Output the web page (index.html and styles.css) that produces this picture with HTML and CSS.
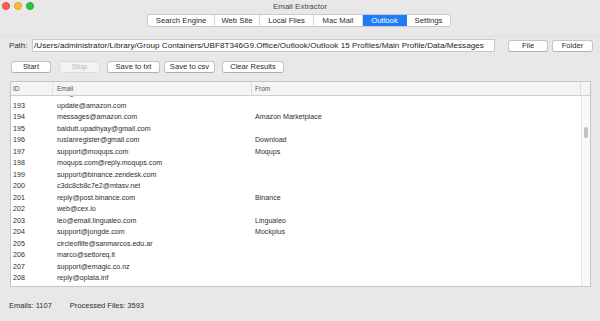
FILE: index.html
```html
<!DOCTYPE html>
<html>
<head>
<meta charset="utf-8">
<link rel="stylesheet" href="styles.css">
</head>
<body>
<div class="window">
  <div class="titlebar">
    <div class="lights">
      <span class="light red"></span>
      <span class="light yellow"></span>
      <span class="light green"></span>
    </div>
    <div class="title">Email Extractor</div>
  </div>
  <div class="tabrow">
    <div class="segmented">
      <div class="seg w1">Search Engine</div>
      <div class="seg w2">Web Site</div>
      <div class="seg w3">Local Files</div>
      <div class="seg w4">Mac Mail</div>
      <div class="seg w5 active">Outlook</div>
      <div class="seg w6">Settings</div>
    </div>
  </div>
  <div class="pathrow">
    <span class="label">Path:</span>
    <div class="field">/Users/administrator/Library/Group Containers/UBF8T346G9.Office/Outlook/Outlook 15 Profiles/Main Profile/Data/Messages</div>
    <button class="btn bfile">File</button>
    <button class="btn bfolder">Folder</button>
  </div>
  <div class="btnrow">
    <button class="btn bstart">Start</button>
    <button class="btn bstop disabled">Stop</button>
    <button class="btn btxt">Save to txt</button>
    <button class="btn bcsv">Save to csv</button>
    <button class="btn bclear">Clear Results</button>
  </div>
  <div class="table">
    <div class="thead">
      <div class="c1">ID</div>
      <div class="c2">Email</div>
      <div class="c3">From</div>
      <div class="corner"></div>
    </div>
    <div class="tbody">
      <div class="rows">
        <div class="inner">
          <div class="row"><div class="c1">192</div><div class="c2">info@koalashow.ca</div><div class="c3"></div></div>
          <div class="row"><div class="c1">193</div><div class="c2">update@amazon.com</div><div class="c3"></div></div>
          <div class="row"><div class="c1">194</div><div class="c2">messages@amazon.com</div><div class="c3">Amazon Marketplace</div></div>
          <div class="row"><div class="c1">195</div><div class="c2">baldutt.upadhyay@gmail.com</div><div class="c3"></div></div>
          <div class="row"><div class="c1">196</div><div class="c2">ruslanregister@gmail.com</div><div class="c3">Download</div></div>
          <div class="row"><div class="c1">197</div><div class="c2">support@moqups.com</div><div class="c3">Moqups</div></div>
          <div class="row"><div class="c1">198</div><div class="c2">moqups.com@reply.moqups.com</div><div class="c3"></div></div>
          <div class="row"><div class="c1">199</div><div class="c2">support@binance.zendesk.com</div><div class="c3"></div></div>
          <div class="row"><div class="c1">200</div><div class="c2">c3dc8cb8c7e2@mtasv.net</div><div class="c3"></div></div>
          <div class="row"><div class="c1">201</div><div class="c2">reply@post.binance.com</div><div class="c3">Binance</div></div>
          <div class="row"><div class="c1">202</div><div class="c2">web@cex.io</div><div class="c3"></div></div>
          <div class="row"><div class="c1">203</div><div class="c2">leo@email.lingualeo.com</div><div class="c3">Lingualeo</div></div>
          <div class="row"><div class="c1">204</div><div class="c2">support@jongde.com</div><div class="c3">Mockplus</div></div>
          <div class="row"><div class="c1">205</div><div class="c2">circleoflife@sanmarcos.edu.ar</div><div class="c3"></div></div>
          <div class="row"><div class="c1">206</div><div class="c2">marco@settoreq.it</div><div class="c3"></div></div>
          <div class="row"><div class="c1">207</div><div class="c2">support@emagic.co.nz</div><div class="c3"></div></div>
          <div class="row"><div class="c1">208</div><div class="c2">reply@oplata.inf</div><div class="c3"></div></div>
          <div class="row"><div class="c1">209</div><div class="c2">announcements@mailer.kodak.com</div><div class="c3"></div></div>
        </div>
      </div>
      <div class="scroll"><div class="thumb"></div></div>
    </div>
  </div>
  <div class="footer">
    <span class="emails">Emails: 1107</span>
    <span class="files">Processed Files: 3593</span>
  </div>
</div>
</body>
</html>
```

FILE: styles.css
```css
* { box-sizing: border-box; }
html, body { margin: 0; padding: 0; }
body {
  width: 600px;
  height: 321px;
  overflow: hidden;
  background: #e8e8e8;
  font-family: "Liberation Sans", Arial, sans-serif;
  color: #2b2b2b;
}
.window { width: 600px; height: 321px; display: flex; flex-direction: column; }

.titlebar { height: 13px; position: relative; display: flex; align-items: center; justify-content: center; }
.lights { position: absolute; left: 2px; top: 2px; display: flex; gap: 4px; }
.light { width: 8px; height: 8px; border-radius: 50%; display: block; }
.red { background: #fc5d57; border: 0.5px solid #e2463f; }
.yellow { background: #fdbc2e; border: 0.5px solid #e0a226; }
.green { background: #28c840; border: 0.5px solid #1daa2c; }
.title { font-size: 8px; color: #4a4a4a; line-height: 13px; margin-top: -1px; }

.tabrow { height: 24px; display: flex; justify-content: center; padding-top: 1px; border-bottom: 1px solid #dedede; }
.segmented {
  display: flex; height: 13px; background: #fff;
  border: 1px solid #c9c9c9; border-radius: 3px; overflow: hidden;
  margin-left: -2px;
}
.seg { font-size: 7.7px; line-height: 11px; text-align: center; color: #2a2a2a; border-right: 1px solid #d6d6d6; }
.seg:last-child { border-right: none; }
.seg.active { background: #1f7cf8; color: #fff; border-right-color: #1f7cf8; }
.w1 { width: 67px; } .w2 { width: 45px; } .w3 { width: 54px; } .w4 { width: 49px; } .w5 { width: 44px; } .w6 { width: 43px; }

.pathrow { display: flex; align-items: center; height: 13px; margin-top: 2px; padding-left: 9px; }
.label { font-size: 7.8px; color: #333; width: 23px; }
.field {
  width: 463px; height: 13px; background: #fff; border: 1px solid #c8c8c8;
  font-size: 8.1px; letter-spacing: 0.04px; line-height: 11px; padding-left: 1px; white-space: nowrap; overflow: hidden; color: #222;
}
.btn {
  font-family: inherit; font-size: 7.6px; color: #2a2a2a; background: #fff;
  border: 1px solid #c4c4c4; border-bottom-color: #b0b0b0; border-radius: 3px;
  height: 12px; padding: 0; line-height: 10px; margin: 0;
}
.bfile { width: 40px; margin-left: 13px; }
.bfolder { width: 41px; margin-left: 4px; }

.btnrow { display: flex; height: 12px; margin-top: 9px; padding-left: 11px; }
.bstart { width: 40px; }
.bstop { width: 41px; margin-left: 8px; }
.disabled { background: #f3f3f3; color: #b5b5b5; border-color: #dcdcdc; }
.btxt { width: 53px; margin-left: 7px; }
.bcsv { width: 51px; margin-left: 4px; }
.bclear { width: 62px; margin-left: 7px; }

.table {
  margin-top: 8px; margin-left: 10px; width: 581px; height: 206px;
  border: 1px solid #c6c6c6; background: #fff; display: flex; flex-direction: column;
}
.thead {
  display: flex; height: 14px; background: #f4f4f4; border-bottom: 1px solid #cfcfcf;
  font-size: 6.5px; color: #555; line-height: 13px;
}
.thead .c1 { width: 42px; padding-left: 2px; border-right: 1px solid #e2e2e2; }
.thead .c2 { width: 199px; padding-left: 4px; border-right: 1px solid #dadada; }
.thead .c3 { flex: 1; padding-left: 3px; border-right: 1px solid #dadada; }
.thead .corner { width: 9px; }
.tbody { flex: 1; display: flex; overflow: hidden; }
.rows { flex: 1; overflow: hidden; }
.inner { margin-top: -7px; }
.row { display: flex; height: 11.5px; line-height: 11.5px; font-size: 7.1px; color: #2e2e2e; white-space: nowrap; }
.row .c1 { width: 42px; padding-left: 2px; }
.row .c2 { width: 199px; padding-left: 4px; }
.row .c3 { flex: 1; padding-left: 3px; }
.scroll { width: 9px; background: #f9f9f9; border-left: 1px solid #e4e4e4; position: relative; }
.thumb { position: absolute; left: 2px; top: 31px; width: 4px; height: 11px; border-radius: 2px; background: #c2c2c2; }

.footer { display: flex; font-size: 7.5px; color: #2e2e2e; padding-left: 9px; margin-top: 14px; }
.files { margin-left: 18px; }
```
